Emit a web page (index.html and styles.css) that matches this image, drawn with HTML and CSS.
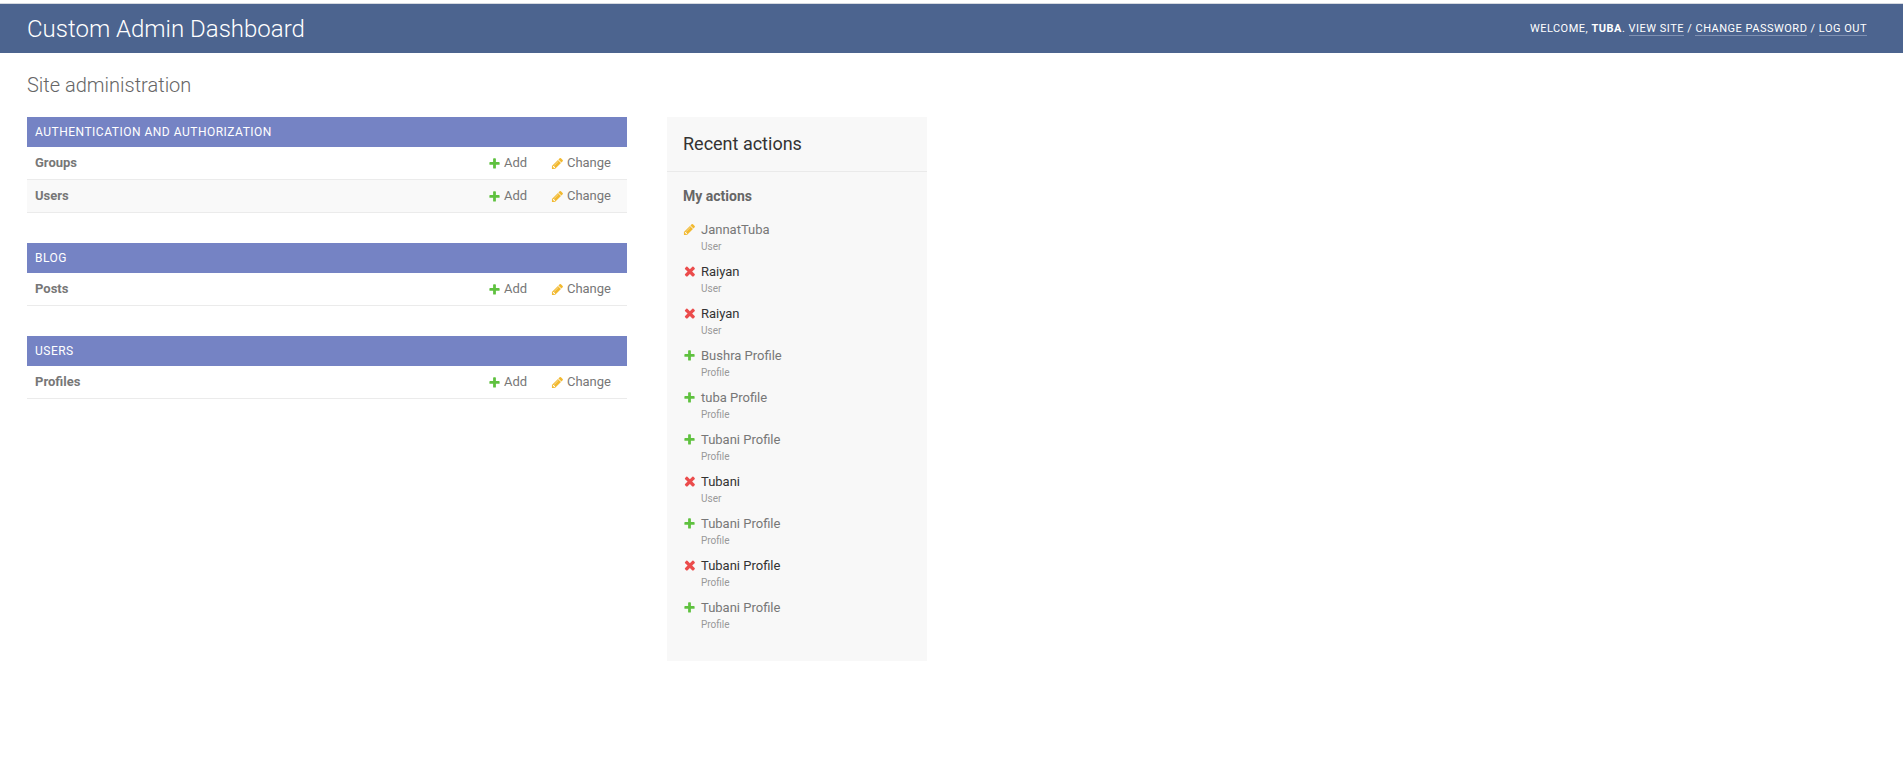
FILE: index.html
```html
<!DOCTYPE html>
<html lang="en">
<head>
<meta charset="utf-8">
<title>Site administration</title>
<link rel="stylesheet" href="styles.css">
</head>
<body>
<svg class="sprite" aria-hidden="true">
  <symbol id="add" viewBox="0 0 1792 1792"><path fill="#5fc13f" d="M1600 796v192q0 40-28 68t-68 28h-416v416q0 40-28 68t-68 28h-192q-40 0-68-28t-28-68v-416h-416q-40 0-68-28t-28-68v-192q0-40 28-68t68-28h416v-416q0-40 28-68t68-28h192q40 0 68 28t28 68v416h416q40 0 68 28t28 68z"/></symbol>
  <symbol id="change" viewBox="0 0 1792 1792"><path fill="#f2b92f" d="M491 1536l91-91-235-235-91 91v107h128v128h107zm523-928q0-22-22-22-10 0-17 7l-542 542q-7 7-7 17 0 22 22 22 10 0 17-7l542-542q7-7 7-17zm-54-192l416 416-832 832h-416v-416zm683 96q0 53-37 90l-166 166-416-416 166-165q36-38 90-38 53 0 91 38l235 234q37 39 37 91z"/></symbol>
  <symbol id="delete" viewBox="80 174 1544 1544"><path fill="#eb4c4c" d="M1490 1322q0 40-28 68l-136 136q-28 28-68 28t-68-28l-294-294-294 294q-28 28-68 28t-68-28l-136-136q-28-28-28-68t28-68l294-294-294-294q-28-28-28-68t28-68l136-136q28-28 68-28t68 28l294 294 294-294q28-28 68-28t68 28l136 136q28 28 28 68t-28 68l-294 294 294 294q28 28 28 68z"/></symbol>
</svg>
<header class="header">
  <h1 class="branding"><a href="#">Custom Admin Dashboard</a></h1>
  <nav class="user-tools">Welcome, <strong>Tuba</strong>. <a href="#">View site</a> / <a href="#">Change password</a> / <a href="#">Log out</a></nav>
</header>
<main class="content">
  <h2 class="page-title">Site administration</h2>
  <div class="columns">
    <div class="apps">
      <table class="module">
        <caption><a href="#">Authentication and Authorization</a></caption>
        <tbody>
        <tr><th scope="row"><a href="#">Groups</a></th><td class="add"><a href="#"><svg class="icon"><use href="#add"/></svg>Add</a></td><td class="change"><a href="#"><svg class="icon"><use href="#change"/></svg>Change</a></td></tr>
        <tr><th scope="row"><a href="#">Users</a></th><td class="add"><a href="#"><svg class="icon"><use href="#add"/></svg>Add</a></td><td class="change"><a href="#"><svg class="icon"><use href="#change"/></svg>Change</a></td></tr>
        </tbody>
      </table>
      <table class="module">
        <caption><a href="#">Blog</a></caption>
        <tbody>
        <tr><th scope="row"><a href="#">Posts</a></th><td class="add"><a href="#"><svg class="icon"><use href="#add"/></svg>Add</a></td><td class="change"><a href="#"><svg class="icon"><use href="#change"/></svg>Change</a></td></tr>
        </tbody>
      </table>
      <table class="module">
        <caption><a href="#">Users</a></caption>
        <tbody>
        <tr><th scope="row"><a href="#">Profiles</a></th><td class="add"><a href="#"><svg class="icon"><use href="#add"/></svg>Add</a></td><td class="change"><a href="#"><svg class="icon"><use href="#change"/></svg>Change</a></td></tr>
        </tbody>
      </table>
    </div>
    <aside class="recent">
      <h2>Recent actions</h2>
      <h3>My actions</h3>
      <ul>
        <li><svg class="icon"><use href="#change"/></svg><div><a href="#">JannatTuba</a><span class="kind">User</span></div></li>
        <li><svg class="icon"><use href="#delete"/></svg><div>Raiyan<span class="kind">User</span></div></li>
        <li><svg class="icon"><use href="#delete"/></svg><div>Raiyan<span class="kind">User</span></div></li>
        <li><svg class="icon"><use href="#add"/></svg><div><a href="#">Bushra Profile</a><span class="kind">Profile</span></div></li>
        <li><svg class="icon"><use href="#add"/></svg><div><a href="#">tuba Profile</a><span class="kind">Profile</span></div></li>
        <li><svg class="icon"><use href="#add"/></svg><div><a href="#">Tubani Profile</a><span class="kind">Profile</span></div></li>
        <li><svg class="icon"><use href="#delete"/></svg><div>Tubani<span class="kind">User</span></div></li>
        <li><svg class="icon"><use href="#add"/></svg><div><a href="#">Tubani Profile</a><span class="kind">Profile</span></div></li>
        <li><svg class="icon"><use href="#delete"/></svg><div>Tubani Profile<span class="kind">Profile</span></div></li>
        <li><svg class="icon"><use href="#add"/></svg><div><a href="#">Tubani Profile</a><span class="kind">Profile</span></div></li>
      </ul>
    </aside>
  </div>
</main>
</body>
</html>
```

FILE: styles.css
```css
* { box-sizing: border-box; }
body {
  margin: 0;
  padding-top: 3px;
  background: #fff;
  color: #333;
  font: 13px/20px Roboto, "Liberation Sans", sans-serif;
}
a { color: #777; text-decoration: none; }
h1, h2, h3, ul { margin: 0; padding: 0; }
.sprite { display: none; }
.icon { width: 13px; height: 13px; flex: none; }

.header {
  display: flex;
  align-items: center;
  justify-content: space-between;
  padding: 10px 36px 9px 27px;
  border-top: 1px solid #d5d9e0;
  background: #4c648f;
  color: #fff;
}
.branding { font-size: 24px; line-height: 30px; font-weight: 300; }
.branding a { color: #fff; }
.user-tools {
  font-size: 11px;
  line-height: 14px;
  letter-spacing: 0.5px;
  text-transform: uppercase;
}
.user-tools a { color: #fff; border-bottom: 1px solid #7f91b3; }

.content { padding: 20px 27px; }
.page-title {
  margin-bottom: 20px;
  color: #666;
  font-size: 20px;
  line-height: 24px;
  font-weight: 300;
}
.columns { display: flex; align-items: flex-start; gap: 40px; }
.apps { display: grid; gap: 30px; width: 600px; }

.module { width: 100%; border-collapse: separate; border-spacing: 0; }
.module caption {
  padding: 8px;
  background: #7583c4;
  font-size: 12px;
  line-height: 14px;
  font-weight: 400;
  letter-spacing: 0.5px;
  text-align: left;
  text-transform: uppercase;
}
.module caption a { color: #fff; }
.module th, .module td {
  padding: 8px;
  border-bottom: 1px solid #ebebeb;
  line-height: 16px;
  text-align: left;
}
.module tr:nth-child(even) { background: #f9f9f9; }
.module .add { width: 63px; }
.module .change { width: 84px; padding-right: 16px; }
.module td a { display: flex; align-items: center; gap: 3px; }

.recent { width: 260px; padding-bottom: 28px; background: #f8f8f8; }
.recent h2 {
  padding: 16px;
  border-bottom: 1px solid #eaeaea;
  font-size: 18px;
  line-height: 22px;
  font-weight: 400;
}
.recent h3 {
  padding: 16px 16px 9px;
  color: #666;
  font-size: 14px;
  line-height: 16px;
}
.recent ul { padding: 0 16px; list-style: none; }
.recent li { display: flex; gap: 5px; padding: 8px 0 0; line-height: 18px; }
.recent li .icon { margin-top: 2px; }
.kind {
  display: block;
  color: #999;
  font-size: 10px;
  line-height: 16px;
}
```
